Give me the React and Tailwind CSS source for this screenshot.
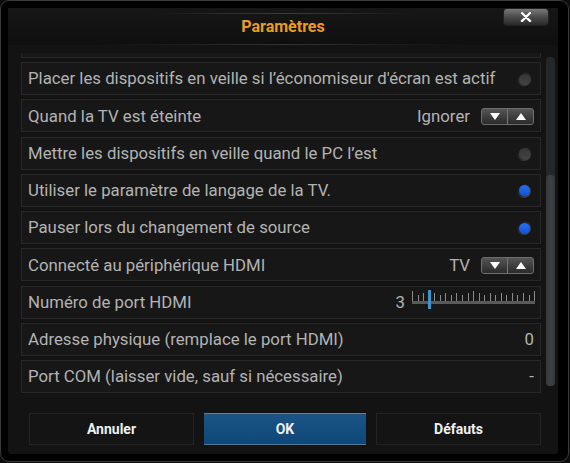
import React from "react";

function Radio({ on }) {
  return (
    <div className="ml-auto mr-[3px] w-[14px] h-[14px] rounded-full bg-gradient-to-br from-[#0c0c0c] to-[#505050] flex items-center justify-center">
      <div
        className={
          on
            ? "w-[11px] h-[11px] rounded-full bg-gradient-to-b from-[#2a70f2] to-[#1152d4]"
            : "w-[11px] h-[11px] rounded-full bg-gradient-to-b from-[#353535] to-[#444]"
        }
      />
    </div>
  );
}

function Spinner() {
  return (
    <div className="flex w-[53px] h-[17px] rounded-[3px] border border-[#6e6e6e] bg-gradient-to-b from-[#555] to-[#2b2b2b] overflow-hidden">
      <div className="flex-1 flex items-center justify-center border-r border-[#777]">
        <svg width="10" height="7" viewBox="0 0 10 7">
          <polygon points="0,0 10,0 5,7" fill="#fff" />
        </svg>
      </div>
      <div className="flex-1 flex items-center justify-center">
        <svg width="10" height="7" viewBox="0 0 10 7">
          <polygon points="0,7 10,7 5,0" fill="#fff" />
        </svg>
      </div>
    </div>
  );
}

function Slider() {
  const ticks = Array.from({ length: 23 }, (_, i) => i);
  return (
    <div className="relative w-[123px] h-[20px]">
      {ticks.map((i) => {
        const h = i === 0 || i === 11 || i === 22 ? 10 : i % 2 === 0 ? 8 : 6;
        return (
          <div
            key={i}
            className="absolute w-px bg-[#8a8a8a]"
            style={{ left: i * 5.55, top: 10 - h, height: h }}
          />
        );
      })}
      <div className="absolute left-0 right-0 top-[10px] h-[3px] bg-[#5a5a5a]" />
      <div className="absolute w-[3px] top-[-1px] h-[19px] bg-[#3f93cc]" style={{ left: 3 * 5.55 - 1 }} />
    </div>
  );
}

const rows = [
  { label: "", right: null },
  { label: "Placer les dispositifs en veille si l’économiseur d'écran est actif", right: "off" },
  { label: "Quand la TV est éteinte", right: "spin", value: "Ignorer" },
  { label: "Mettre les dispositifs en veille quand le PC l’est", right: "off" },
  { label: "Utiliser le paramètre de langage de la TV.", right: "on" },
  { label: "Pauser lors du changement de source", right: "on" },
  { label: "Connecté au périphérique HDMI", right: "spin", value: "TV" },
  { label: "Numéro de port HDMI", right: "slider" },
  { label: "Adresse physique (remplace le port HDMI)", right: "text", value: "0" },
  { label: "Port COM (laisser vide, sauf si nécessaire)", right: "text", value: "-" },
];

function Row({ row }) {
  return (
    <div className="h-[33px] shrink-0 border border-[#282828] bg-[#171717] flex items-center pl-[6px] pr-[6px] pt-[1px]">
      <span className="text-[16.8px] text-[#b3b3b3] whitespace-nowrap">{row.label}</span>
      {row.right === "off" && <Radio on={false} />}
      {row.right === "on" && <Radio on={true} />}
      {row.right === "spin" && (
        <div className="ml-auto flex items-center gap-[11px]">
          <span className="text-[16.8px] text-[#b3b3b3]">{row.value}</span>
          <Spinner />
        </div>
      )}
      {row.right === "slider" && (
        <div className="ml-auto flex items-center gap-[7px] mr-[-1px]">
          <span className="text-[16.8px] text-[#b3b3b3]">3</span>
          <div className="mt-[-3px]">
            <Slider />
          </div>
        </div>
      )}
      {row.right === "text" && (
        <span className="ml-auto text-[16.8px] text-[#b3b3b3]">{row.value}</span>
      )}
    </div>
  );
}

export default function App() {
  return (
    <div className="w-[570px] h-[463px] bg-[#0c0c0c] overflow-hidden font-['Roboto','Liberation_Sans',sans-serif]">
      <div className="w-[569px] h-[462px] rounded-[9px] border border-[#3a3a3a] bg-black pl-[7px] pt-[7px] pr-[10px] pb-[7px]">
        <div className="relative w-full h-full bg-[#131313] rounded-[3px] flex flex-col">
          <div className="relative h-[37px] shrink-0 flex items-center justify-center bg-gradient-to-b from-[#161616] to-[#0f0f0f]">
            <div className="absolute top-[5px] left-[140px] right-[140px] h-px bg-gradient-to-r from-transparent via-[#3c3c3c] to-transparent" />
            <div className="absolute bottom-0 left-[90px] right-[90px] h-px bg-gradient-to-r from-transparent via-[#333] to-transparent" />
            <span className="text-[16px] font-bold text-[#ec9c24]">Paramètres</span>
            <div className="absolute top-0 right-[9px] w-[46px] h-[18px] rounded-[4px] border border-[#222] bg-gradient-to-b from-[#7a7a7a] via-[#4a4a4a] to-[#2a2a2a] flex items-center justify-center">
              <svg width="12" height="10" viewBox="0 0 12 10">
                <path d="M2 1 L10 9 M10 1 L2 9" stroke="#555" strokeWidth="4" strokeLinecap="round" />
                <path d="M2 1 L10 9 M10 1 L2 9" stroke="#fff" strokeWidth="2.2" strokeLinecap="round" />
              </svg>
            </div>
          </div>

          <div className="flex mt-[8px]">
            <div className="ml-[13px] w-[520px] h-[342px] overflow-hidden">
              <div className="flex flex-col gap-[4.25px] mt-[-28.25px]">
                {rows.map((r, i) => (
                  <Row key={i} row={r} />
                ))}
              </div>
            </div>
            <div className="relative ml-[5px] mt-[4px] w-[9px] h-[329px] rounded-[4px] bg-[#24272a]">
              <div className="absolute left-0 right-0 bottom-0 h-[211px] rounded-[4px] bg-gradient-to-r from-[#34383b] via-[#3d4144] to-[#33373a]" />
            </div>
          </div>

          <div className="flex mt-[18px] ml-[21px] gap-[10px]">
            <div className="w-[165px] h-[32px] border border-[#242424] bg-[#141414] flex items-center justify-center text-[14px] font-bold text-[#f0f0f0]">
              Annuler
            </div>
            <div className="relative w-[162px] h-[32px] border-t border-[#6a7f90] border-b border-b-[#4a7aa0] bg-gradient-to-b from-[#1a5585] to-[#0f4878] flex items-center justify-center text-[14px] font-bold text-[#f0f0f0]">
              OK
            </div>
            <div className="w-[165px] h-[32px] border border-[#242424] bg-[#141414] flex items-center justify-center text-[14px] font-bold text-[#f0f0f0]">
              Défauts
            </div>
          </div>
        </div>
      </div>
    </div>
  );
}
